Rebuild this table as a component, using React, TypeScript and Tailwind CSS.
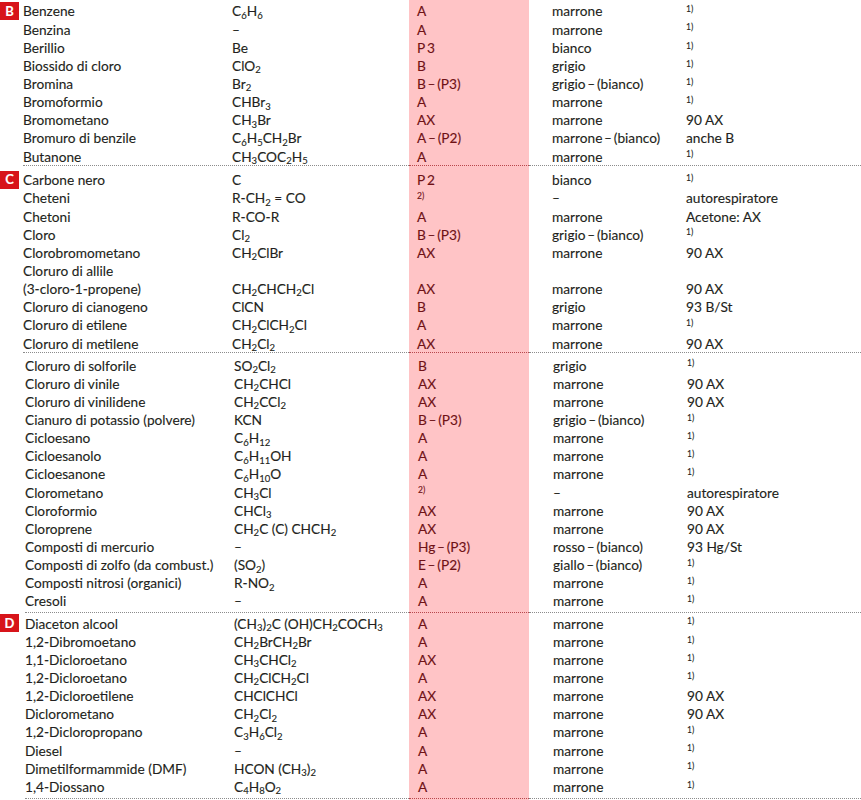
import React from 'react';

type Row = [string, string, string, string, string];

type Section = {
  badge?: string;
  wide: boolean;
  padTop: string;
  padBottom: string;
  rows: Row[];
};

// "_12" -> subscript, "^1)" -> footnote mark
function rich(text: string) {
  const parts = text.split(/(_\d+|\^\d\))/);
  return parts.map((part, i) => {
    if (part.startsWith('_')) {
      return (
        <sub key={i} className="text-[9.5px]">
          {part.slice(1)}
        </sub>
      );
    }
    if (part.startsWith('^')) {
      return (
        <sup key={i} className="text-[8.5px]">
          {part.slice(1)}
        </sup>
      );
    }
    return part;
  });
}

const sections: Section[] = [
  {
    badge: 'B',
    wide: false,
    padTop: 'pt-[2px]',
    padBottom: 'pb-0',
    rows: [
      ['Benzene', 'C_6H_6', 'A', 'marrone', '^1)'],
      ['Benzina', '–', 'A', 'marrone', '^1)'],
      ['Berillio', 'Be', 'P\u20093', 'bianco', '^1)'],
      ['Biossido di cloro', 'ClO_2', 'B', 'grigio', '^1)'],
      ['Bromina', 'Br_2', 'B\u2009–\u2009(P3)', 'grigio\u2009–\u2009(bianco)', '^1)'],
      ['Bromoformio', 'CHBr_3', 'A', 'marrone', '^1)'],
      ['Bromometano', 'CH_3Br', 'AX', 'marrone', '90 AX'],
      ['Bromuro di benzile', 'C_6H_5CH_2Br', 'A\u2009–\u2009(P2)', 'marrone\u2009–\u2009(bianco)', 'anche B'],
      ['Butanone', 'CH_3COC_2H_5', 'A', 'marrone', '^1)'],
    ],
  },
  {
    badge: 'C',
    wide: false,
    padTop: 'pt-[4.5px]',
    padBottom: 'pb-0',
    rows: [
      ['Carbone nero', 'C', 'P\u20092', 'bianco', '^1)'],
      ['Cheteni', 'R-CH_2 = CO', '^2)', '–', 'autorespiratore'],
      ['Chetoni', 'R-CO-R', 'A', 'marrone', 'Acetone: AX'],
      ['Cloro', 'Cl_2', 'B\u2009–\u2009(P3)', 'grigio\u2009–\u2009(bianco)', '^1)'],
      ['Clorobromometano', 'CH_2ClBr', 'AX', 'marrone', '90 AX'],
      ['Cloruro di allile', '', '', '', ''],
      ['(3-cloro-1-propene)', 'CH_2CHCH_2Cl', 'AX', 'marrone', '90 AX'],
      ['Cloruro di cianogeno', 'ClCN', 'B', 'grigio', '93 B/St'],
      ['Cloruro di etilene', 'CH_2ClCH_2Cl', 'A', 'marrone', '^1)'],
      ['Cloruro di metilene', 'CH_2Cl_2', 'AX', 'marrone', '90 AX'],
    ],
  },
  {
    wide: true,
    padTop: 'pt-[3px]',
    padBottom: 'pb-[2px]',
    rows: [
      ['Cloruro di solforile', 'SO_2Cl_2', 'B', 'grigio', '^1)'],
      ['Cloruro di vinile', 'CH_2CHCl', 'AX', 'marrone', '90 AX'],
      ['Cloruro di vinilidene', 'CH_2CCl_2', 'AX', 'marrone', '90 AX'],
      ['Cianuro di potassio (polvere)', 'KCN', 'B\u2009–\u2009(P3)', 'grigio\u2009–\u2009(bianco)', '^1)'],
      ['Cicloesano', 'C_6H_12', 'A', 'marrone', '^1)'],
      ['Cicloesanolo', 'C_6H_11OH', 'A', 'marrone', '^1)'],
      ['Cicloesanone', 'C_6H_10O', 'A', 'marrone', '^1)'],
      ['Clorometano', 'CH_3Cl', '^2)', '–', 'autorespiratore'],
      ['Cloroformio', 'CHCl_3', 'AX', 'marrone', '90 AX'],
      ['Cloroprene', 'CH_2C (C) CHCH_2', 'AX', 'marrone', '90 AX'],
      ['Composti di mercurio', '–', 'Hg\u2009–\u2009(P3)', 'rosso\u2009–\u2009(bianco)', '93 Hg/St'],
      ['Composti di zolfo (da combust.)', '(SO_2)', 'E\u2009–\u2009(P2)', 'giallo\u2009–\u2009(bianco)', '^1)'],
      ['Composti nitrosi (organici)', 'R-NO_2', 'A', 'marrone', '^1)'],
      ['Cresoli', '–', 'A', 'marrone', '^1)'],
    ],
  },
  {
    badge: 'D',
    wide: true,
    padTop: 'pt-[1px]',
    padBottom: 'pb-[2px]',
    rows: [
      ['Diaceton alcool', '(CH_3)_2C (OH)CH_2COCH_3', 'A', 'marrone', '^1)'],
      ['1,2-Dibromoetano', 'CH_2BrCH_2Br', 'A', 'marrone', '^1)'],
      ['1,1-Dicloroetano', 'CH_3CHCl_2', 'AX', 'marrone', '^1)'],
      ['1,2-Dicloroetano', 'CH_2ClCH_2Cl', 'A', 'marrone', '^1)'],
      ['1,2-Dicloroetilene', 'CHClCHCl', 'AX', 'marrone', '90 AX'],
      ['Diclorometano', 'CH_2Cl_2', 'AX', 'marrone', '90 AX'],
      ['1,2-Dicloropropano', 'C_3H_6Cl_2', 'A', 'marrone', '^1)'],
      ['Diesel', '–', 'A', 'marrone', '^1)'],
      ['Dimetilformammide (DMF)', 'HCON (CH_3)_2', 'A', 'marrone', '^1)'],
      ['1,4-Diossano', 'C_4H_8O_2', 'A', 'marrone', '^1)'],
    ],
  },
];

function Separator({ wide }: { wide: boolean }) {
  return (
    <div className="flex h-px">
      <div className={wide ? 'w-[25px] shrink-0' : 'w-[23px] shrink-0'} />
      <div className="flex-1 border-t border-dotted border-[#8c8c8c]" />
      <div className="w-[120px] shrink-0 border-t border-dotted border-[#b8474c]" />
      <div className="w-[332px] shrink-0 border-t border-dotted border-[#8c8c8c]" />
    </div>
  );
}

export default function App() {
  return (
    <div className="w-[861px] h-[800px] overflow-hidden bg-white bg-[linear-gradient(90deg,transparent_409px,#ffc4c6_409px,#ffc4c6_529px,transparent_529px)] font-['Lato','Open_Sans',sans-serif] text-[13.7px] text-[#231f20] [-webkit-text-stroke:0.12px]">
      {sections.map((section, si) => (
        <div key={si}>
          <div className={`${section.padTop} ${section.padBottom}`}>
            {section.rows.map((row, ri) => (
              <div key={ri} className="flex h-[18.15px] items-center whitespace-nowrap leading-none">
                <div className={section.wide ? 'w-[25px] shrink-0' : 'w-[23px] shrink-0'}>
                  {ri === 0 && section.badge && (
                    <div className="flex h-[18px] w-[19px] items-center justify-center bg-[#d7141a] text-[13px] font-bold text-white">
                      {section.badge}
                    </div>
                  )}
                </div>
                <div className="w-[209px] shrink-0 pt-[0.5px]">{row[0]}</div>
                <div className={section.wide ? 'w-[184px] shrink-0 pt-[0.5px]' : 'w-[185px] shrink-0 pt-[0.5px]'}>
                  {rich(row[1])}
                </div>
                <div className="w-[135px] shrink-0 pt-[0.5px] text-[#6f1216]">{rich(row[2])}</div>
                <div className="w-[134px] shrink-0 pt-[0.5px]">{rich(row[3])}</div>
                <div className="flex-1 pt-[0.5px]">{rich(row[4])}</div>
              </div>
            ))}
          </div>
          <Separator wide={si >= 2} />
        </div>
      ))}
    </div>
  );
}
